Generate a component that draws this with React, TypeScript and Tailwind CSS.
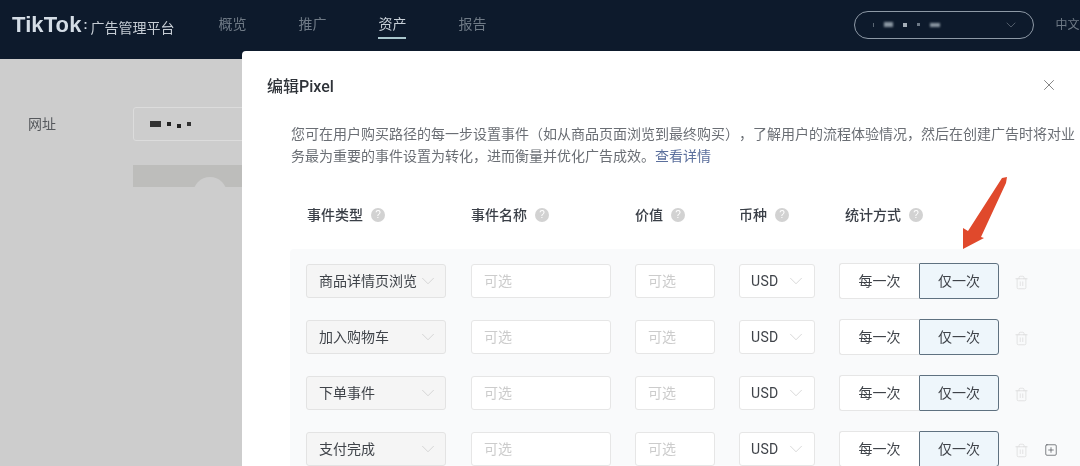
import { ChevronDown, Trash2, SquarePlus, X } from "lucide-react"

const font = "font-['Liberation_Sans','Noto_Sans_CJK_SC',sans-serif]"

const navItems = ["概览", "推广", "资产", "报告"]

const events = ["商品详情页浏览", "加入购物车", "下单事件", "支付完成"]

function Help() {
  return (
    <span className="ml-[8px] flex h-[14px] w-[14px] items-center justify-center rounded-full bg-[#d2d2d2] text-[10px] leading-none text-white">
      ?
    </span>
  )
}

function Label({ text, className }: { text: string; className: string }) {
  return (
    <div className={`flex items-center text-[14px] font-medium text-[#3a3f47] ${className}`}>
      {text}
      <Help />
    </div>
  )
}

function Row({ name, last }: { name: string; last: boolean }) {
  return (
    <div className="flex h-[34px] items-center">
      <div className="flex h-[34px] w-[140px] items-center justify-between rounded-[3px] border border-[#e3e3e3] bg-[#f5f5f5] pl-[12px] pr-[6px] text-[14px] text-[#3f4349]">
        <span>{name}</span>
        <ChevronDown className="h-[22px] w-[22px] text-[#c4c4c4]" strokeWidth={0.7} />
      </div>
      <div className="ml-[25px] flex h-[34px] w-[140px] items-center rounded-[3px] border border-[#e6e6e6] bg-white pl-[12px] text-[14px] text-[#cccccc]">
        可选
      </div>
      <div className="ml-[24px] flex h-[34px] w-[80px] items-center rounded-[3px] border border-[#e6e6e6] bg-white pl-[12px] text-[14px] text-[#cccccc]">
        可选
      </div>
      <div className="ml-[24px] flex h-[34px] w-[76px] items-center justify-between rounded-[3px] border border-[#e6e6e6] bg-white pl-[11px] pr-[7px] text-[14px] text-[#3f4349]">
        <span className="font-['Roboto',sans-serif] tracking-[0.3px]">USD</span>
        <ChevronDown className="h-[22px] w-[22px] text-[#c4c4c4]" strokeWidth={0.7} />
      </div>
      <div className="ml-[24px] flex h-[36px] w-[160px] text-[14px] text-[#3f4349]">
        <div className="flex w-[80px] items-center justify-center rounded-l-[3px] border border-r-0 border-[#e6e6e6] bg-white">
          每一次
        </div>
        <div className="flex w-[80px] items-center justify-center rounded-r-[3px] rounded-l-[1px] border border-[#5f7180] bg-[#eef6fb]">
          仅一次
        </div>
      </div>
      <Trash2 className="ml-[15px] mt-[2px] h-[15px] w-[15px] text-[#d6d6d6]" strokeWidth={1} />
      {last && <SquarePlus className="ml-[15px] mt-[2px] h-[14px] w-[14px] text-[#4a4f55]" strokeWidth={1.2} />}
    </div>
  )
}

export default function App() {
  return (
    <div className={`relative h-[466px] w-[1080px] overflow-hidden bg-[#cdcdcd] blur-[0.4px] ${font}`}>
      {/* top bar */}
      <header className="flex h-[59px] items-center bg-[#0d1a2c] pb-[10px] pl-[12px]">
        <span className="text-[22px] font-bold leading-none tracking-[0.1px] text-[#d4dde6]">TikTok</span>
        <span className="ml-[2px] text-[12px] font-bold text-[#d4dde6]">:</span>
        <span className="ml-[3px] mt-[7px] text-[14px] text-[#c5ccd4]">广告管理平台</span>
        <nav className="ml-[44px] mt-[3px] flex gap-[52px]">
          {navItems.map((item) => (
            <div
              key={item}
              className={
                item === "资产"
                  ? "border-b-2 border-[#a9c6cc] pb-[2px] text-[14px] text-[#c8d0d8]"
                  : "pb-[4px] text-[14px] text-[#6f7a86]"
              }
            >
              {item}
            </div>
          ))}
        </nav>
        <div className="ml-[368px] flex h-[28px] w-[180px] items-center rounded-full border border-[#8d99a6] pl-[18px] pr-[14px]">
          <div className="flex flex-1 items-center gap-[10px]">
            <span className="h-[4px] w-[1px] bg-[#5b6774]" />
            <span className="h-[5px] w-[9px] bg-[#8a96a2] blur-[1px]" />
            <span className="h-[4px] w-[4px] bg-[#a4aeb8] blur-[0.5px]" />
            <span className="h-[3px] w-[3px] bg-[#6d7986] blur-[0.5px]" />
            <span className="h-[4px] w-[10px] bg-[#8a96a2] blur-[1px]" />
          </div>
          <ChevronDown className="h-[16px] w-[16px] text-[#6f7a86]" strokeWidth={1} />
        </div>
        <span className="ml-[21px] whitespace-nowrap text-[12px] text-[#6f7a86]">中文</span>
      </header>

      {/* page behind the dialog */}
      <div className="flex pl-[28px] pt-[48px]">
        <div className="w-[105px] pt-[7px] text-[14px] text-[#55585c]">网址</div>
        <div className="w-[200px]">
          <div className="flex h-[34px] items-center gap-[6px] rounded-[3px] border border-[#dcdcdc] pl-[16px]">
            <span className="h-[6px] w-[11px] bg-[#333333] blur-[0.5px]" />
            <span className="h-[4px] w-[4px] bg-[#222222]" />
            <span className="mt-[4px] h-[4px] w-[4px] bg-[#222222]" />
            <span className="h-[4px] w-[4px] bg-[#333333]" />
          </div>
          <div className="mt-[24px] flex h-[22px] justify-center overflow-hidden bg-[#bdbdbb]">
            <div className="ml-[-46px] mt-[12px] h-[34px] w-[34px] rounded-full bg-[#cdcdcd]" />
          </div>
        </div>
      </div>

      {/* dialog */}
      <div className="absolute left-[242px] top-[51px] h-[460px] w-[900px] rounded-[4px] bg-white">
        <div className="pl-[25px] pt-[25px] text-[16px] font-medium leading-[22px] text-[#2f3339]">
          编辑<span className="font-['Roboto',sans-serif]">Pixel</span>
        </div>
        <X className="absolute left-[798px] top-[25px] h-[18px] w-[18px] text-[#7d7d7d]" strokeWidth={1.25} />
        <p className="ml-[49px] mt-[25px] w-[800px] text-[14px] leading-[22px] text-[#6a6e74] [text-spacing-trim:space-all]">
          您可在用户购买路径的每一步设置事件（如从商品页面浏览到最终购买），了解用户的流程体验情况，然后在创建广告时将对业
          <br />
          务最为重要的事件设置为转化，进而衡量并优化广告成效。
          <span className="text-[#5b6f9c]">查看详情</span>
        </p>
        <div className="ml-[65px] mt-[37px] flex h-[22px] items-center">
          <Label text="事件类型" className="w-[164px]" />
          <Label text="事件名称" className="w-[164px]" />
          <Label text="价值" className="w-[104px]" />
          <Label text="币种" className="w-[106px]" />
          <Label text="统计方式" className="w-[120px]" />
        </div>
        <div className="ml-[48px] mt-[23px] flex flex-col gap-[22px] rounded-[4px] bg-[#f9fafb] pb-[40px] pl-[16px] pt-[15px]">
          {events.map((name, i) => (
            <Row key={name} name={name} last={i === events.length - 1} />
          ))}
        </div>
      </div>

      {/* red arrow annotation */}
      <svg className="absolute left-[955px] top-[170px] h-[85px] w-[60px]" viewBox="0 0 60 85">
        <polygon points="52,7 51,13 26,67 29,68 8,79 8,58 13,61 47,8" fill="#e0492c" />
      </svg>
    </div>
  )
}
